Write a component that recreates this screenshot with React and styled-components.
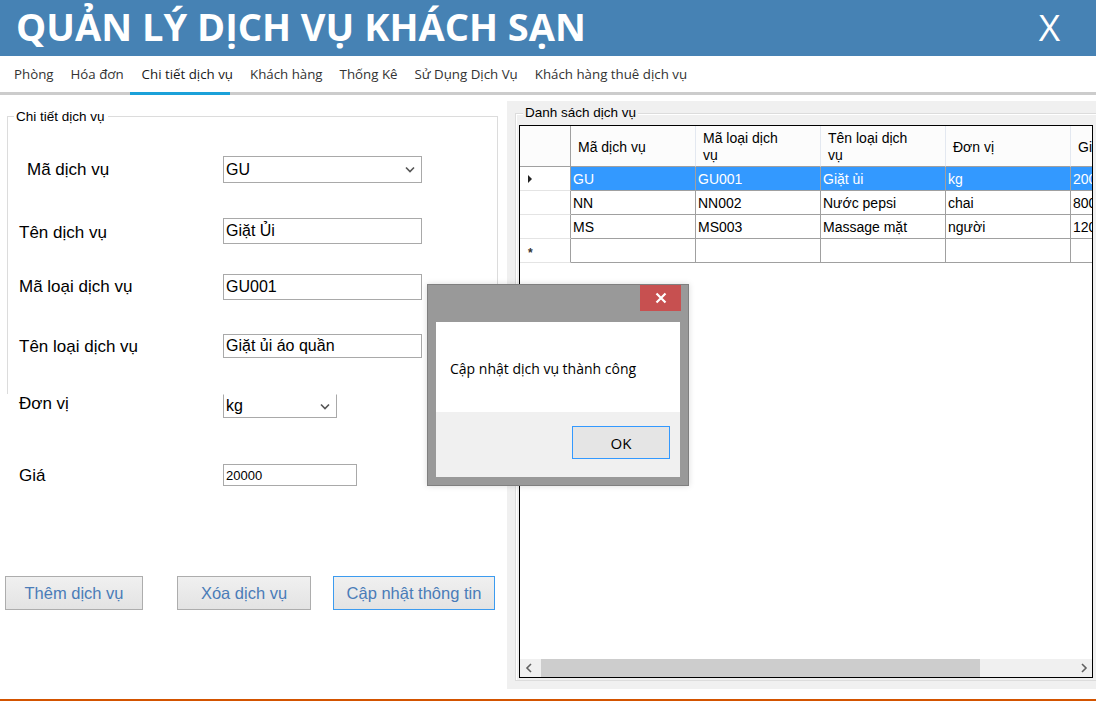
import styled, { createGlobalStyle } from "styled-components"

const GlobalStyle = createGlobalStyle`
  html, body { margin: 0; padding: 0; background: #fff; }
  * { box-sizing: border-box; }
`

const tabs = [
  "Phòng",
  "Hóa đơn",
  "Chi tiết dịch vụ",
  "Khách hàng",
  "Thống Kê",
  "Sử Dụng Dịch Vụ",
  "Khách hàng thuê dịch vụ",
]

const rows = [
  { ma: "GU", loai: "GU001", ten: "Giặt ủi", dv: "kg", gia: "20000", selected: true },
  { ma: "NN", loai: "NN002", ten: "Nước pepsi", dv: "chai", gia: "8000" },
  { ma: "MS", loai: "MS003", ten: "Massage mặt", dv: "người", gia: "120000" },
]

const Chevron = () => (
  <svg width="10" height="7" viewBox="0 0 10 7">
    <polyline points="1,1.5 5,5.5 9,1.5" fill="none" stroke="#555" strokeWidth="1.6" />
  </svg>
)

export default function App() {
  return (
    <Screen>
      <GlobalStyle />
      <Header>
        <Title>QUẢN LÝ DỊCH VỤ KHÁCH SẠN</Title>
        <CloseX>X</CloseX>
      </Header>
      <TabBar>
        {tabs.map((t, i) => (
          <Tab key={t} $active={i === 2}>{t}</Tab>
        ))}
      </TabBar>
      <Main>
        <LeftPanel>
          <GroupBox>
            <Legend>Chi tiết dịch vụ</Legend>
            <FormRow $gap={39} $h={27}>
              <Label $indent={8}>Mã dịch vụ</Label>
              <Combo $w={199}>
                <span>GU</span>
                <Chevron />
              </Combo>
            </FormRow>
            <FormRow $gap={35} $h={26} $shift={2}>
              <Label>Tên dịch vụ</Label>
              <TextBox $w={199}>Giặt Ủi</TextBox>
            </FormRow>
            <FormRow $gap={30} $h={26}>
              <Label>Mã loại dịch vụ</Label>
              <TextBox $w={199}>GU001</TextBox>
            </FormRow>
            <FormRow $gap={34} $h={24} $shift={1}>
              <Label>Tên loại dịch vụ</Label>
              <TextBox $w={199}>Giặt ủi áo quần</TextBox>
            </FormRow>
            <FormRow $gap={36} $h={24} $shift={-2}>
              <Label>Đơn vị</Label>
              <Combo $w={114} $noTop>
                <span>kg</span>
                <Chevron />
              </Combo>
            </FormRow>
            <FormRow $gap={46} $h={22} $shift={1}>
              <Label>Giá</Label>
              <TextBox $w={134} $small>20000</TextBox>
            </FormRow>
          </GroupBox>
          <ButtonRow>
            <ActionButton $w={138}>Thêm dịch vụ</ActionButton>
            <ActionButton $w={134} style={{ marginLeft: 34 }}>Xóa dịch vụ</ActionButton>
            <ActionButton $w={162} $focused style={{ marginLeft: 22 }}>Cập nhật thông tin</ActionButton>
          </ButtonRow>
        </LeftPanel>
        <RightPanel>
          <ListGroup>
            <ListLegend>Danh sách dịch vụ</ListLegend>
            <Grid>
              <GridRow $header>
                <RowHead $header />
                <HeadCell>Mã dịch vụ</HeadCell>
                <HeadCell>Mã loại dịch<br />vụ</HeadCell>
                <HeadCell>Tên loại dịch<br />vụ</HeadCell>
                <HeadCell>Đơn vị</HeadCell>
                <HeadCell>Giá</HeadCell>
              </GridRow>
              {rows.map((r) => (
                <GridRow key={r.ma}>
                  <RowHead>{r.selected && <Arrow />}</RowHead>
                  <Cell $sel={r.selected}>{r.ma}</Cell>
                  <Cell $sel={r.selected}>{r.loai}</Cell>
                  <Cell $sel={r.selected}>{r.ten}</Cell>
                  <Cell $sel={r.selected}>{r.dv}</Cell>
                  <Cell $sel={r.selected}>{r.gia}</Cell>
                </GridRow>
              ))}
              <GridRow>
                <RowHead><Star>*</Star></RowHead>
                <Cell />
                <Cell />
                <Cell />
                <Cell />
                <Cell />
              </GridRow>
              <GridFill />
              <HScroll>
                <ScrollArrow>
                  <svg width="8" height="10" viewBox="0 0 8 10">
                    <polyline points="6,1 2,5 6,9" fill="none" stroke="#606060" strokeWidth="1.6" />
                  </svg>
                </ScrollArrow>
                <Track>
                  <Thumb />
                </Track>
                <ScrollArrow>
                  <svg width="8" height="10" viewBox="0 0 8 10">
                    <polyline points="2,1 6,5 2,9" fill="none" stroke="#606060" strokeWidth="1.6" />
                  </svg>
                </ScrollArrow>
              </HScroll>
            </Grid>
          </ListGroup>
        </RightPanel>
      </Main>
      <Footer />

      <Dialog>
        <DialogTitle>
          <DialogClose>
            <svg width="12" height="12" viewBox="0 0 12 12">
              <path d="M1.5 1.5 L10.5 10.5 M10.5 1.5 L1.5 10.5" stroke="#fff" strokeWidth="2.2" />
            </svg>
          </DialogClose>
        </DialogTitle>
        <DialogBody>Cập nhật dịch vụ thành công</DialogBody>
        <DialogFooter>
          <OkButton>OK</OkButton>
        </DialogFooter>
      </Dialog>
    </Screen>
  )
}

const Screen = styled.div`
  position: relative;
  width: 1096px;
  height: 701px;
  overflow: hidden;
  display: flex;
  flex-direction: column;
  background: #fff;
  font-family: "Liberation Sans", Arial, sans-serif;
`

const Header = styled.div`
  height: 56px;
  flex-shrink: 0;
  background: #4682b4;
  display: flex;
  align-items: center;
  justify-content: space-between;
  padding: 0 36px 0 16px;
  color: #fff;
`

const Title = styled.div`
  font-family: "Open Sans", sans-serif;
  font-weight: 700;
  font-size: 38px;
  line-height: 1;
  margin-top: -5px;
  letter-spacing: 0;
`

const CloseX = styled.div`
  font-family: "Open Sans", sans-serif;
  font-weight: 400;
  font-size: 37px;
  line-height: 1;
  margin-top: -4px;
`

const TabBar = styled.div`
  height: 39px;
  flex-shrink: 0;
  display: flex;
  align-items: center;
  gap: 17px;
  padding: 0 0 0 14px;
  border-bottom: 3px solid #cccccc;
  font-family: "Open Sans", sans-serif;
  font-size: 13.3px;
`

const Tab = styled.div`
  position: relative;
  color: ${(p) => (p.$active ? "#1a1a1a" : "#333")};
  white-space: nowrap;
  margin-left: ${(p) => (p.$active ? "1px" : "0")};
  &::after {
    content: "";
    display: ${(p) => (p.$active ? "block" : "none")};
    position: absolute;
    left: -12px;
    right: 3px;
    bottom: -12px;
    height: 3px;
    background: #1ba1d9;
  }
`

const Main = styled.div`
  flex: 1;
  display: flex;
  min-height: 0;
`

const LeftPanel = styled.div`
  width: 507px;
  flex-shrink: 0;
  display: flex;
  flex-direction: column;
`

const GroupBox = styled.div`
  position: relative;
  margin: 21px 0 0 7px;
  width: 491px;
  height: 278px;
  border: 1px solid #dcdcdc;
  border-bottom: none;
  display: flex;
  flex-direction: column;
`

const Legend = styled.div`
  position: absolute;
  top: -9px;
  left: 6px;
  padding: 0 3px 0 2px;
  background: #fff;
  font-size: 13.5px;
  line-height: 17px;
  color: #000;
`

const FormRow = styled.div`
  display: flex;
  align-items: center;
  height: ${(p) => p.$h}px;
  margin-top: ${(p) => p.$gap}px;
  padding-left: 11px;
  flex-shrink: 0;
  & > :first-child {
    transform: translateY(${(p) => p.$shift || 0}px);
  }
`

const Label = styled.div`
  width: 204px;
  padding-left: ${(p) => p.$indent || 0}px;
  font-size: 17px;
  color: #000;
  white-space: nowrap;
`

const TextBox = styled.div`
  width: ${(p) => p.$w}px;
  height: 100%;
  border: 1px solid #a9a9a9;
  background: #fff;
  display: flex;
  align-items: center;
  padding-left: 2px;
  font-size: ${(p) => (p.$small ? "13px" : "16px")};
  color: #000;
`

const Combo = styled(TextBox)`
  justify-content: space-between;
  padding-right: 6px;
  border-top-color: ${(p) => (p.$noTop ? "transparent" : "#a9a9a9")};
`

const ButtonRow = styled.div`
  display: flex;
  margin-top: 182px;
  padding-left: 5px;
`

const ActionButton = styled.div`
  width: ${(p) => p.$w}px;
  height: 34px;
  border: 1px solid ${(p) => (p.$focused ? "#3c9bef" : "#adadad")};
  background: linear-gradient(#f0f0f0, #e3e3e3);
  display: flex;
  align-items: center;
  justify-content: center;
  color: #4a7cb8;
  font-size: 16.5px;
`

const RightPanel = styled.div`
  flex: 1;
  margin-top: 6px;
  height: 588px;
  background: #f0f0f0;
  padding: 12px 0 0 8px;
`

const ListGroup = styled.div`
  position: relative;
  height: 568px;
  border: 1px solid #dcdcdc;
  border-right: none;
  box-shadow: inset 1px 1px 0 #fff;
  padding: 11px 0 0 3px;
`

const ListLegend = styled.div`
  position: absolute;
  top: -10px;
  left: 7px;
  padding: 0 2px;
  background: #f0f0f0;
  font-size: 13.5px;
  line-height: 17px;
  color: #000;
`

const Grid = styled.div`
  width: 574px;
  height: 553px;
  border: 1px solid #000;
  background: #fff;
  display: flex;
  flex-direction: column;
  overflow: hidden;
  font-size: 14px;
`

const GridRow = styled.div`
  display: grid;
  grid-template-columns: 51px repeat(5, 125px);
  height: ${(p) => (p.$header ? "41px" : "24px")};
  flex-shrink: 0;
`

const RowHead = styled.div`
  background: ${(p) => (p.$header ? "#fcfcfc" : "#fff")};
  border-right: 1px solid #a0a0a0;
  border-bottom: 1px solid ${(p) => (p.$header ? "#a0a0a0" : "#e4e4e4")};
  display: flex;
  align-items: center;
  padding-left: 7px;
`

const HeadCell = styled.div`
  background: #fcfcfc;
  border-right: 1px solid #e3e8f0;
  border-bottom: 1px solid #a0a0a0;
  display: flex;
  align-items: center;
  padding: 2px 0 0 7px;
  line-height: 17px;
  color: #000;
  white-space: nowrap;
  overflow: hidden;
`

const Cell = styled.div`
  background: ${(p) => (p.$sel ? "#3399ff" : "#fff")};
  color: ${(p) => (p.$sel ? "#fff" : "#000")};
  border-right: 1px solid #a0a0a0;
  border-bottom: 1px solid #a0a0a0;
  display: flex;
  align-items: center;
  padding-left: 2px;
  white-space: nowrap;
  overflow: hidden;
`

const Arrow = styled.div`
  width: 0;
  height: 0;
  border-top: 4px solid transparent;
  border-bottom: 4px solid transparent;
  border-left: 4px solid #222;
  margin-left: 1px;
`

const Star = styled.span`
  font-size: 12px;
  font-weight: 700;
  color: #333;
  margin: 5px 0 0 1px;
`

const GridFill = styled.div`
  flex: 1;
`

const HScroll = styled.div`
  height: 18px;
  flex-shrink: 0;
  display: flex;
  background: #f0f0f0;
`

const ScrollArrow = styled.div`
  width: 17px;
  display: flex;
  align-items: center;
  justify-content: center;
`

const Track = styled.div`
  flex: 1;
  padding-left: 4px;
`

const Thumb = styled.div`
  width: 439px;
  height: 100%;
  background: #cdcdcd;
`

const Footer = styled.div`
  height: 2px;
  flex-shrink: 0;
  background: #d35400;
`

const Dialog = styled.div`
  position: absolute;
  left: 427px;
  top: 284px;
  width: 262px;
  height: 202px;
  background: #999999;
  border: 1px solid #7f7f7f;
  padding: 0 8px 8px;
  display: flex;
  flex-direction: column;
  box-shadow: 0 0 6px rgba(0, 0, 0, 0.15);
`

const DialogTitle = styled.div`
  height: 37px;
  flex-shrink: 0;
  display: flex;
  justify-content: flex-end;
  align-items: flex-start;
`

const DialogClose = styled.div`
  width: 41px;
  height: 26px;
  margin-right: -1px;
  background: #c75050;
  display: flex;
  align-items: center;
  justify-content: center;
`

const DialogBody = styled.div`
  height: 90px;
  flex-shrink: 0;
  background: #fff;
  display: flex;
  align-items: center;
  padding: 2px 0 0 14px;
  font-family: "Open Sans", sans-serif;
  font-size: 14px;
  color: #000;
`

const DialogFooter = styled.div`
  flex: 1;
  background: #f0f0f0;
  display: flex;
  justify-content: flex-end;
  align-items: flex-start;
  padding: 14px 10px 0 0;
`

const OkButton = styled.div`
  width: 98px;
  height: 33px;
  border: 1px solid #3399ff;
  background: #e5e5e5;
  display: flex;
  align-items: center;
  justify-content: center;
  font-family: "Open Sans", sans-serif;
  font-size: 15px;
  color: #000;
`
